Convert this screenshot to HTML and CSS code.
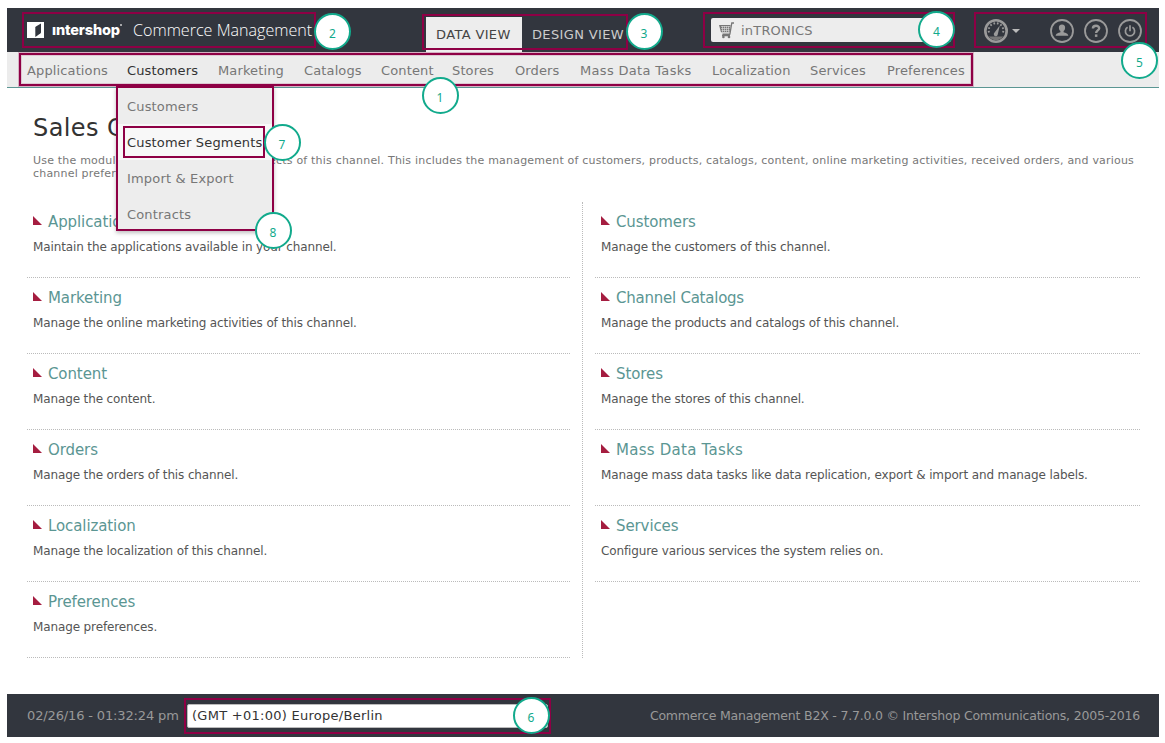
FILE: index.html
```html
<!DOCTYPE html>
<html lang="en">
<head>
<meta charset="utf-8">
<title>Commerce Management</title>
<link rel="stylesheet" href="styles.css">
</head>
<body>
<div class="page">
  <header class="top">
    <div class="brand">
      <svg class="logo" width="17" height="16" viewBox="0 0 17 16"><rect width="17" height="16" fill="#fff"/><path d="M8.300 5.600Q8.500 4.800 9.300 4.300L14 1.500v8.700Q14 11 13.300 11.600L8.300 15z" fill="#32363e"/></svg>
      <span class="wordmark">ıntershop<i class="reg"></i></span>
      <span class="product">Commerce Management</span>
    </div>
    <div class="views"><span class="view active">DATA VIEW</span><span class="view">DESIGN VIEW</span></div>
    <div class="channel">
      <svg width="17" height="17" viewBox="0 0 17 17"><path d="M1 3h11.600l-1 7.200H3z" fill="#777"/><path d="M3 4.500h9M3 6.500h8.500M3.500 8.500h8M4.500 4v6M6.500 4v6M8.500 4v6M10.500 4v6" stroke="#ddd" stroke-width=".6"/><path d="M16 1h-2.200l-1.900 11.200H4.500M4 13.500h8" fill="none" stroke="#777" stroke-width="1.300"/><circle cx="5.400" cy="15" r="1.300" fill="#777"/><circle cx="11" cy="15" r="1.300" fill="#777"/></svg>
      <span>inTRONICS</span>
    </div>
    <div class="tools">
      <svg width="24" height="24" viewBox="0 0 24 24"><circle cx="12" cy="12" r="10.700" fill="none" stroke="#9a9a9a" stroke-width="2.600"/><path d="M5 13.500A7.300 7.300 0 1 1 19 13.500" fill="none" stroke="#9a9a9a" stroke-width="1.900" stroke-dasharray="1.700 1.900"/><path d="M4.800 17.500h14.400a9 9 0 0 1-14.400 0z" fill="#777"/><path d="m15.800 6.500-2 8.700a2 2 0 1 1-3.200-1.600z" fill="#9a9a9a"/></svg>
      <i class="caret"></i>
      <svg class="user" width="24" height="24" viewBox="0 0 24 24"><circle cx="12" cy="12" r="11" fill="none" stroke="#9a9a9a" stroke-width="1.800"/><path d="M12 5.500c2.200 0 3.300 1.400 3.100 3.400-.1 1.600-.7 2.400-1.500 3.200v1.100c2 .8 4.700 1.200 4.700 3.600H5.700c0-2.400 2.700-2.800 4.700-3.600v-1.100c-.8-.8-1.400-1.600-1.500-3.200C8.700 6.900 9.800 5.500 12 5.500z" fill="#9a9a9a"/></svg>
      <svg width="24" height="24" viewBox="0 0 24 24"><circle cx="12" cy="12" r="11" fill="none" stroke="#9a9a9a" stroke-width="1.800"/><path d="M8.900 9.600C8.900 5.900 15.200 6 15.200 9.200c0 2.200-3.100 2.300-3.100 4.900" fill="none" stroke="#9a9a9a" stroke-width="2.400"/><rect x="10.900" y="15.400" width="2.500" height="2.500" fill="#9a9a9a"/></svg>
      <svg width="24" height="24" viewBox="0 0 24 24"><circle cx="12" cy="12" r="11" fill="none" stroke="#9a9a9a" stroke-width="1.800"/><path d="M9.600 8.300a4.600 4.600 0 1 0 4.800 0M12 6.300v6" fill="none" stroke="#9a9a9a" stroke-width="1.700"/></svg>
    </div>
  </header>
  <nav class="nav">
    <a class="w80">Applications</a><a class="w71 on">Customers</a><a class="w66">Marketing</a><a class="w57">Catalogs</a><a class="w51">Content</a><a class="w43">Stores</a><a class="w45">Orders</a><a class="w112 loose">Mass Data Tasks</a><a class="w78">Localization</a><a class="w57">Services</a><a>Preferences</a>
  </nav>
  <main class="main">
    <h1>Sales Channel</h1>
    <p class="intro"><span class="lead">Use the modules to manage the</span>aspects of this channel. This includes the management of customers, products, catalogs, content, online marketing activities, received orders, and various<br>channel preferences.</p>
    <div class="modules">
      <div class="col">
        <section><h2>Applications</h2><p>Maintain the applications available in your channel.</p></section>
        <section><h2>Marketing</h2><p>Manage the online marketing activities of this channel.</p></section>
        <section><h2>Content</h2><p>Manage the content.</p></section>
        <section><h2>Orders</h2><p>Manage the orders of this channel.</p></section>
        <section><h2>Localization</h2><p>Manage the localization of this channel.</p></section>
        <section><h2>Preferences</h2><p>Manage preferences.</p></section>
      </div>
      <div class="col right">
        <section><h2>Customers</h2><p>Manage the customers of this channel.</p></section>
        <section><h2 class="tight">Channel Catalogs</h2><p>Manage the products and catalogs of this channel.</p></section>
        <section><h2>Stores</h2><p>Manage the stores of this channel.</p></section>
        <section><h2 class="loose">Mass Data Tasks</h2><p>Manage mass data tasks like data replication, export &amp; import and manage labels.</p></section>
        <section><h2>Services</h2><p>Configure various services the system relies on.</p></section>
      </div>
    </div>
  </main>
  <footer class="foot">
    <span class="time">02/26/16 - 01:32:24 pm</span>
    <span class="zone">(GMT +01:00) Europe/Berlin</span>
    <span class="copy">Commerce Management B2X - 7.7.0.0 © Intershop Communications, 2005-2016</span>
  </footer>
</div>
<div class="menu"><a>Customers</a><a class="hot">Customer Segments</a><a>Import &amp; Export</a><a>Contracts</a></div>
<div class="frame f2"></div><div class="frame f3"></div><div class="frame f4"></div><div class="frame f5"></div><div class="frame f1"></div><div class="frame f6"></div><div class="frame f7"></div>
<b class="pin p1">1</b><b class="pin p2">2</b><b class="pin p3">3</b><b class="pin p4">4</b><b class="pin p5">5</b><b class="pin p6">6</b><b class="pin p7">7</b><b class="pin p8">8</b>
</body>
</html>
```
FILE: styles.css
```css
* { box-sizing: border-box; }
body { margin: 0; background: #fff; font: 13px "DejaVu Sans", sans-serif; color: #777; overflow: hidden; }
.page { width: 1152px; height: 729px; margin: 8px 0 0 7px; display: flex; flex-direction: column; }
h1, h2, p { margin: 0; font-weight: normal; }
svg { display: block; flex: none; }

.top { height: 44px; background: #32363e; display: flex; align-items: flex-start; color: #fff; white-space: nowrap; }
.brand { width: 419px; height: 44px; padding-left: 20px; display: flex; align-items: center; }
.wordmark { width: 74px; margin-left: 8px; font: 800 14.5px/20px Inter, sans-serif; letter-spacing: -.15px; display: flex; }
.reg { width: 2px; height: 2px; margin-top: 4px; background: #ccc; border-radius: 50%; }
.product { margin-left: 7px; font: 300 16.1px/22px "Open Sans", sans-serif; }
.views { display: flex; margin-top: 9px; width: 285px; letter-spacing: .36px; }
.view { height: 35px; line-height: 35px; padding: 0 10px; color: #ccc; }
.view.active { width: 96px; background: #ededed; color: #444; }
.channel { width: 240px; height: 24px; margin-top: 10px; padding-left: 7px; background: #ededed; border-radius: 2px; display: flex; align-items: center; gap: 6px; color: #777; letter-spacing: .2px; }
.tools { display: flex; align-items: center; gap: 10px; height: 44px; padding: 2px 0 0 33px; }
.caret { border: 4px solid transparent; border-top-color: #bbb; border-bottom: 0; margin-left: -6px; }
.user { margin-left: 20px; }

.nav { height: 36px; background: #ececec; border-bottom: 1px solid #5b9693; padding-left: 20px; display: flex; gap: 20px; white-space: nowrap; }
.nav a { line-height: 37px; letter-spacing: .13px; }
.nav .on { color: #333; border-bottom: 2px solid #5b9693; }
.nav .loose { letter-spacing: .32px; }
.w80 { width: 80px; }
.w71 { width: 71px; }
.w66 { width: 66px; }
.w57 { width: 57px; }
.w51 { width: 51px; }
.w43 { width: 43px; }
.w45 { width: 45px; }
.w112 { width: 112px; }
.w78 { width: 78px; }

.main { flex: 1; padding: 23px 19px 0 20px; }
h1 { font-size: 24px; line-height: 34px; color: #333; padding-left: 6px; letter-spacing: .4px; }
.intro { margin: 9px 0 0 6px; font-size: 11px; line-height: 13px; white-space: nowrap; letter-spacing: .2px; }
.lead { display: inline-block; width: 216px; }
.modules { display: flex; margin-top: 22px; }
.col { width: 556px; height: 456px; border-right: 1px dotted #bbb; padding-right: 12px; }
.col.right { width: 557px; border: 0; padding: 0 0 0 12px; }
section { height: 76px; border-bottom: 1px dotted #bbb; padding: 9px 0 0 6px; white-space: nowrap; }
h2 { font-size: 15px; line-height: 22px; color: #5b9693; display: flex; align-items: center; gap: 6px; letter-spacing: -.1px; }
h2.tight { letter-spacing: -.24px; }
h2.loose { letter-spacing: .25px; }
h2::before { content: ""; width: 9px; height: 9px; background: #a51d40; clip-path: polygon(0 0, 100% 100%, 0 100%); margin-top: -3px; }
section p { margin-top: 6px; font-size: 12px; line-height: 17px; color: #555; letter-spacing: -.125px; }

.foot { height: 43px; background: #32363e; display: flex; align-items: center; padding: 0 19px 0 20px; color: #999; white-space: nowrap; }
.time { width: 160px; letter-spacing: -.14px; }
.zone { width: 361px; height: 24px; line-height: 22px; padding-left: 4px; background: #fff; border: 1px solid #bbb; border-radius: 2px; color: #333; letter-spacing: .27px; }
.copy { margin-left: auto; font-size: 12.5px; letter-spacing: -.2px; }

.menu { position: absolute; left: 116px; top: 86px; width: 158px; height: 145px; border: 2px solid #8e0045; background: #ededed; box-shadow: 0 2px 4px rgba(0,0,0,.25); letter-spacing: .17px; }
.menu a { display: block; height: 36px; line-height: 37px; padding-left: 9px; white-space: nowrap; }
.menu .hot { background: #f8f8f8; color: #333; }

.frame { position: absolute; border: 2px solid #8e0045; }
.f1 { left: 19px; top: 53px; width: 954px; height: 33px; box-shadow: 0 0 0 1px rgba(142,0,69,.25), inset 0 0 0 1px rgba(142,0,69,.15); }
.f2 { left: 22px; top: 12px; width: 294px; height: 36px; }
.f3 { left: 422px; top: 14px; width: 206px; height: 36px; }
.f4 { left: 703px; top: 12px; width: 252px; height: 36px; }
.f5 { left: 974px; top: 12px; width: 173px; height: 36px; }
.f6 { left: 184px; top: 698px; width: 367px; height: 36px; }
.f7 { left: 123px; top: 126px; width: 142px; height: 32px; }
.pin { position: absolute; width: 37px; height: 37px; border: 2px solid #12aa8c; border-radius: 50%; background: #fff; color: #12aa8c; font: 12px/38px "Noto Sans", sans-serif; text-align: center; }
.p1 { left: 421.5px; top: 76.5px; }
.p2 { left: 314px; top: 12.5px; }
.p3 { left: 625.5px; top: 12.5px; }
.p4 { left: 918px; top: 10.5px; }
.p5 { left: 1121px; top: 41.500px; }
.p6 { left: 512.5px; top: 696.5px; }
.p7 { left: 263.5px; top: 123.500px; }
.p8 { left: 254.5px; top: 211.500px; }
```
